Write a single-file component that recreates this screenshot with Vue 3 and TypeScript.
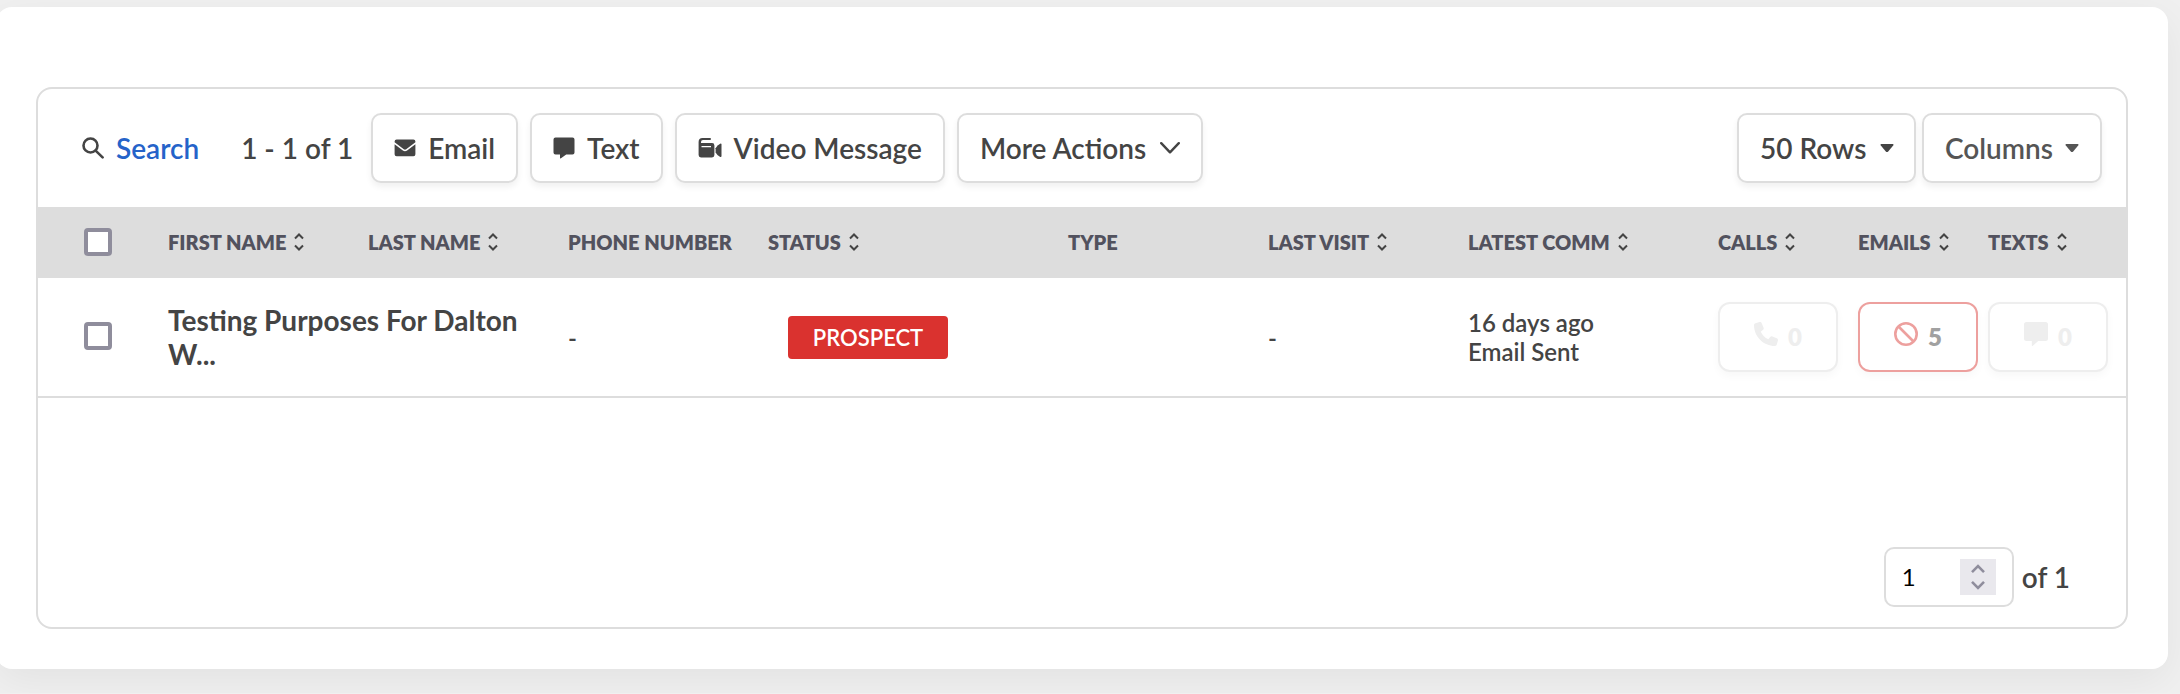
<script setup lang="ts">
import { ref } from 'vue'

interface Column {
  key: string
  label: string
  sortable: boolean
  width: number
}

interface Contact {
  id: number
  name: string
  phone: string
  status: string
  type: string
  lastVisit: string
  commWhen: string
  commWhat: string
  calls: number
  emails: number
  texts: number
}

const columns: Column[] = [
  { key: 'first', label: 'FIRST NAME', sortable: true, width: 200 },
  { key: 'last', label: 'LAST NAME', sortable: true, width: 200 },
  { key: 'phone', label: 'PHONE NUMBER', sortable: false, width: 200 },
  { key: 'status', label: 'STATUS', sortable: true, width: 300 },
  { key: 'type', label: 'TYPE', sortable: false, width: 200 },
  { key: 'visit', label: 'LAST VISIT', sortable: true, width: 200 },
  { key: 'comm', label: 'LATEST COMM', sortable: true, width: 250 },
  { key: 'calls', label: 'CALLS', sortable: true, width: 140 },
  { key: 'emails', label: 'EMAILS', sortable: true, width: 130 },
  { key: 'texts', label: 'TEXTS', sortable: true, width: 158 },
]

const contacts: Contact[] = [
  {
    id: 1,
    name: 'Testing Purposes For Dalton W...',
    phone: '-',
    status: 'PROSPECT',
    type: '',
    lastVisit: '-',
    commWhen: '16 days ago',
    commWhat: 'Email Sent',
    calls: 0,
    emails: 5,
    texts: 0,
  },
]

const selected = ref<number[]>([])
const page = ref(1)

function toggleAll(event: Event) {
  const on = (event.target as HTMLInputElement).checked
  selected.value = on ? contacts.map((c) => c.id) : []
}

function step(by: number) {
  page.value = Math.min(1, Math.max(1, page.value + by))
}
</script>

<template>
  <main class="card">
    <section class="panel">
      <div class="toolbar">
        <a class="search" href="#">
          <svg class="search-icon" viewBox="0 0 22 22" aria-hidden="true">
            <circle cx="8.5" cy="8.5" r="7" />
            <path d="M13.6 13.6L20.6 20.4" />
          </svg>
          <span>Search</span>
        </a>
        <span class="count">1 - 1 of 1</span>
        <div class="actions">
          <button class="btn" type="button">
            <svg class="icon" viewBox="0 0 22 22" aria-hidden="true">
              <path d="M2.6 2.6h16.8a2 2 0 0 1 2 2v.7l-9.2 7a2 2 0 0 1-2.4 0l-9.2-7v-.7a2 2 0 0 1 2-2z" />
              <path d="M.6 7.2l8.3 6.3a3.5 3.5 0 0 0 4.2 0l8.3-6.3v10.1a2 2 0 0 1-2 2H2.6a2 2 0 0 1-2-2z" />
            </svg>
            Email
          </button>
          <button class="btn" type="button">
            <svg class="icon" viewBox="0 0 22 22" aria-hidden="true">
              <path d="M2.5.5h17A2 2 0 0 1 21.5 2.500v13a2 2 0 0 1-2 2h-6.300L8 21.300a.6.6 0 0 1-1-.5V17.500H2.500a2 2 0 0 1-2-2v-13a2 2 0 0 1 2-2z" />
            </svg>
            Text
          </button>
          <button class="btn" type="button">
            <svg class="icon wide" viewBox="0 0 24 22" aria-hidden="true">
              <path d="M4.500 1H12a1 1 0 0 1 0 2H5A2 2 0 0 0 3 5v1H14A2.400 2.400 0 0 1 16.400 8.400V18A2.400 2.400 0 0 1 14 20.400H3A2.400 2.400 0 0 1 .6 18V4.900A3.900 3.900 0 0 1 4.500 1zM3.500 9v1.200h9.500V9z" fill-rule="evenodd" />
              <path d="M17.600 11.200q1.800-3.400 4.600-4.500 1.300-.4 1.300.9v11.400q0 1.300-1.300.9-2.800-1.100-4.600-4.500z" />
            </svg>
            Video Message
          </button>
          <button class="btn more" type="button">
            More Actions
            <svg class="chevron" viewBox="0 0 20 12" aria-hidden="true">
              <path d="M1.200 1.200L10 10.300l8.800-9.100" />
            </svg>
          </button>
        </div>
        <div class="view">
          <div class="select-wrap">
            <select class="btn rows" aria-label="Rows per page">
              <option>50 Rows</option>
            </select>
            <svg class="caret over" viewBox="0 0 14 10" aria-hidden="true">
              <path d="M1.200 1h11.600a.8.8 0 0 1 .6 1.300L8.200 8.400a1.600 1.600 0 0 1-2.400 0L.6 2.300A.8.8 0 0 1 1.200 1z" />
            </svg>
          </div>
          <button class="btn columns" type="button">
            Columns
            <svg class="caret" viewBox="0 0 14 10" aria-hidden="true">
              <path d="M1.200 1h11.600a.8.8 0 0 1 .6 1.300L8.200 8.400a1.600 1.600 0 0 1-2.400 0L.6 2.300A.8.8 0 0 1 1.200 1z" />
            </svg>
          </button>
        </div>
      </div>

      <table class="grid">
        <colgroup>
          <col class="check-col" />
          <col v-for="c in columns" :key="c.key" :style="{ width: c.width + 'px' }" />
        </colgroup>
        <thead>
          <tr>
            <th class="check" scope="col">
              <input
                type="checkbox"
                aria-label="Select all"
                :checked="selected.length === contacts.length"
                @change="toggleAll"
              />
            </th>
            <th v-for="c in columns" :key="c.key" scope="col">
              <button v-if="c.sortable" class="sort" type="button">
                {{ c.label }}
                <svg viewBox="0 0 10 18" aria-hidden="true">
                  <path d="M1 5.500l4-4 4 4M1 12.500l4 4 4-4" />
                </svg>
              </button>
              <span v-else>{{ c.label }}</span>
            </th>
          </tr>
        </thead>
        <tbody>
          <tr v-for="c in contacts" :key="c.id">
            <td class="check">
              <input v-model="selected" type="checkbox" :value="c.id" :aria-label="c.name" />
            </td>
            <td class="name" colspan="2">{{ c.name }}</td>
            <td>{{ c.phone }}</td>
            <td><span class="status">{{ c.status }}</span></td>
            <td>{{ c.type }}</td>
            <td>{{ c.lastVisit }}</td>
            <td>{{ c.commWhen }}<br />{{ c.commWhat }}</td>
            <td>
              <button class="tally" type="button" aria-label="Calls">
                <svg viewBox="0 0 512 512" aria-hidden="true">
                  <path d="M164.900 24.600c-7.700-18.600-28-28.500-47.400-23.200l-88 24C12.100 30.200 0 46 0 64c0 247.400 200.600 448 448 448 18 0 33.800-12.100 38.600-29.500l24-88c5.300-19.400-4.600-39.700-23.200-47.400l-96-40c-16.300-6.800-35.200-2.100-46.300 11.600L304.700 368C234.300 334.700 177.300 277.700 144 207.300l49.300-40.300c13.700-11.200 18.400-30 11.600-46.300z" />
                </svg>
                <b>{{ c.calls }}</b>
              </button>
            </td>
            <td>
              <button class="tally blocked" type="button" aria-label="Emails">
                <svg viewBox="0 0 24 24" aria-hidden="true">
                  <circle cx="12" cy="12" r="10.700" />
                  <path d="M4.500 4.500l15 15" />
                </svg>
                <b>{{ c.emails }}</b>
              </button>
            </td>
            <td>
              <button class="tally" type="button" aria-label="Texts">
                <svg viewBox="0 0 24 24" aria-hidden="true">
                  <path d="M2.500 0h19A2.500 2.500 0 0 1 24 2.500v14a2.500 2.500 0 0 1-2.500 2.500h-7.300L8.600 23.900a.5.5 0 0 1-.8-.4V19H2.500A2.500 2.500 0 0 1 0 16.500v-14A2.500 2.500 0 0 1 2.500 0z" />
                </svg>
                <b>{{ c.texts }}</b>
              </button>
            </td>
          </tr>
        </tbody>
      </table>

      <div class="pager">
        <div class="page-box">
          <input v-model.number="page" type="number" min="1" max="1" aria-label="Page" />
          <div class="stepper">
            <button type="button" aria-label="Next page" @click="step(1)">
              <svg viewBox="0 0 16 10" aria-hidden="true"><path d="M2 8.200l6-6 6 6" /></svg>
            </button>
            <button type="button" aria-label="Previous page" @click="step(-1)">
              <svg viewBox="0 0 16 10" aria-hidden="true"><path d="M2 1.800l6 6 6-6" /></svg>
            </button>
          </div>
        </div>
        <span>of 1</span>
      </div>
    </section>
  </main>
</template>

<style>
body {
  background: #f0f0f0;
  overflow-x: hidden;
}
</style>

<style scoped>
.card,
.card * {
  box-sizing: border-box;
}

.card {
  margin: 7px 12px 24px -4px;
  padding: 80px 40px 40px;
  border-radius: 16px;
  background: #fff;
  box-shadow: 0 12px 40px rgba(0, 0, 0, 0.06);
  color: #444;
  font-family: Lato, "Liberation Sans", sans-serif;
  font-size: 28px;
  font-weight: 600;
  line-height: 34px;
}

.card button,
.card input,
.card select {
  font: inherit;
  color: inherit;
}

.panel {
  border: 2px solid #ddd;
  border-radius: 16px;
}

.toolbar {
  display: flex;
  align-items: center;
  padding: 24px 24px 24px 44px;
  white-space: nowrap;
}

.search {
  display: flex;
  align-items: center;
  gap: 12px;
  color: #2563c9;
  text-decoration: none;
}

.search-icon {
  width: 22px;
  height: 22px;
  fill: none;
  stroke: #444;
  stroke-width: 2.6;
  stroke-linecap: round;
}

.count {
  margin: 0 18px 0 42px;
}

.actions {
  display: flex;
  gap: 12px;
}

.view {
  display: flex;
  gap: 6px;
  margin-left: auto;
}

.btn {
  display: flex;
  align-items: center;
  gap: 12px;
  height: 70px;
  padding: 0 21px;
  border: 2px solid #ddd;
  border-radius: 10px;
  background: #fff;
  box-shadow: 0 4px 6px rgba(0, 0, 0, 0.06);
  cursor: pointer;
}

.icon {
  width: 22px;
  height: 22px;
  fill: #444;
}

.icon.wide {
  width: 24px;
}

.more {
  gap: 14px;
}

.chevron {
  width: 20px;
  height: 12px;
  fill: none;
  stroke: #444;
  stroke-width: 2.4;
  stroke-linecap: round;
  stroke-linejoin: round;
}

.caret {
  width: 14px;
  height: 10px;
  fill: currentColor;
}

.select-wrap {
  position: relative;
}

.rows {
  width: 179px;
  appearance: none;
}

.caret.over {
  position: absolute;
  top: 30px;
  right: 22px;
  pointer-events: none;
}

.card .columns {
  justify-content: space-between;
  width: 180px;
  color: #555;
}

.grid {
  width: 100%;
  border-collapse: separate;
  border-spacing: 0;
  table-layout: fixed;
}

.check-col {
  width: 110px;
}

th,
td {
  padding: 0 0 0 20px;
  text-align: left;
}

th {
  height: 71px;
  padding-bottom: 2px;
  background: #ddd;
  color: #52525e;
  font-size: 20px;
  font-weight: 800;
  line-height: 24px;
  white-space: nowrap;
}

td {
  height: 120px;
  border-bottom: 2px solid #ddd;
  font-size: 24px;
  line-height: 29px;
}

th.check,
td.check {
  padding-bottom: 2px;
  padding-left: 46px;
}

.check input {
  display: block;
  width: 28px;
  height: 28px;
  margin: 0;
  border: 4px solid #8f8d9c;
  border-radius: 4px;
  background: #fff;
  appearance: none;
}

.check input:checked {
  background: #8f8d9c;
}

.sort {
  display: flex;
  align-items: center;
  gap: 8px;
  padding: 0;
  border: 0;
  background: none;
  cursor: pointer;
}

.sort svg {
  width: 10px;
  height: 18px;
  fill: none;
  stroke: #444;
  stroke-width: 2;
}

.name {
  padding-right: 20px;
  font-size: 28px;
  font-weight: 700;
  line-height: 34px;
}

.status {
  display: block;
  width: 160px;
  margin-left: 20px;
  border-radius: 4px;
  background: #da322f;
  color: #fff;
  font-size: 22px;
  line-height: 43px;
  text-align: center;
}

.tally {
  display: flex;
  align-items: center;
  justify-content: center;
  gap: 10px;
  width: 120px;
  height: 70px;
  padding: 0 0 6px;
  border: 2px solid #eee;
  border-radius: 12px;
  background: #fff;
  box-shadow: 0 4px 8px rgba(0, 0, 0, 0.03);
  cursor: pointer;
}

.tally b {
  padding-top: 4px;
  color: #eee;
  font-weight: 800;
}

.tally svg {
  width: 24px;
  height: 24px;
  fill: #eee;
}

.tally.blocked {
  border-color: #eda09e;
}

.blocked b {
  color: #a1a1a1;
}

.blocked svg {
  fill: none;
  stroke: #eda09e;
  stroke-width: 2.6;
}

.pager {
  display: flex;
  align-items: center;
  justify-content: flex-end;
  gap: 8px;
  padding: 149px 56px 20px 20px;
}

.page-box {
  display: flex;
  align-items: center;
  width: 130px;
  height: 60px;
  padding: 0 16px;
  border: 2px solid #ddd;
  border-radius: 10px;
}

.page-box input {
  flex: 1;
  min-width: 0;
  padding: 0;
  border: 0;
  background: none;
  color: #000;
  font-size: 24px;
  font-weight: 400;
  appearance: textfield;
}

.page-box input::-webkit-inner-spin-button {
  appearance: none;
}

.stepper {
  display: flex;
  flex-direction: column;
  justify-content: center;
  gap: 6px;
  width: 36px;
  height: 36px;
  background: #e9e8ed;
}

.stepper button {
  display: flex;
  justify-content: center;
  padding: 0;
  border: 0;
  background: none;
}

.stepper svg {
  width: 16px;
  height: 10px;
  fill: none;
  stroke: #8f8d9c;
  stroke-width: 2.6;
}
</style>
